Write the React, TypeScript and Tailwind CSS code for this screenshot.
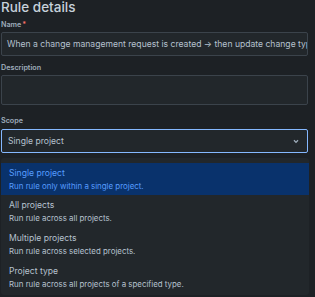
import React from 'react'

type Option = {
  label: string
  description: string
}

const options: Option[] = [
  { label: 'Single project', description: 'Run rule only within a single project.' },
  { label: 'All projects', description: 'Run rule across all projects.' },
  { label: 'Multiple projects', description: 'Run rule across selected projects.' },
  { label: 'Project type', description: 'Run rule across all projects of a specified type.' },
]

const font = { fontFamily: 'Inter, "Liberation Sans", Arial, sans-serif' }

const Label: React.FC<{ children: React.ReactNode; required?: boolean }> = ({ children, required }) => (
  <div className="h-[10px] text-[7.2px] leading-[10px] font-semibold text-[#9fadbc]">
    {children}
    {required && <span className="ml-[1px] text-[#f87168]">*</span>}
  </div>
)

const App: React.FC = () => {
  const selected = 0

  return (
    <div
      className="h-[297px] w-full overflow-hidden bg-[#1d2125] pl-[1px] text-[#b6c2cf]"
      style={font}
    >
      <h1 className="mt-[-1px] h-[16px] text-[13.5px] leading-[16px] font-medium text-[#c7d1db]">
        Rule details
      </h1>

      <div className="mt-[5px]">
        <Label required>Name</Label>
        <div className="mt-[2px] flex h-[24px] w-[307px] items-center overflow-hidden rounded-[2px] border border-[#3b434b] bg-[#22272b] px-[5px]">
          <span className="whitespace-nowrap text-[8.6px] leading-[12px]">
            When a change management request is created → then update change type
          </span>
        </div>
      </div>

      <div className="mt-[7px]">
        <Label>Description</Label>
        <div className="mt-[2px] h-[30px] w-[307px] rounded-[2px] border border-[#3b434b] bg-[#22272b]" />
      </div>

      <div className="mt-[11px]">
        <Label>Scope</Label>
        <div className="mt-[3px] flex h-[24px] w-[307px] items-center justify-between rounded-[2px] border border-[#85b8ff] bg-[#22272b] pl-[6px] pr-[8px]">
          <span className="text-[8.6px] leading-[12px]">Single project</span>
          <svg width="6" height="5" viewBox="0 0 6 5" className="text-[#9fadbc]">
            <path d="M1 1.2 L3 3.4 L5 1.2" fill="none" stroke="currentColor" strokeWidth="1.3" />
          </svg>
        </div>
      </div>

      <div className="mt-[5px] w-[308px] rounded-[3px] bg-[#22272b] pt-[5px] pb-[1px]">
        {options.map((o, i) => (
          <div
            key={o.label}
            className={
              i === selected
                ? 'h-[32px] bg-[#09326c] pl-[8px] pt-[4px] text-[#579dff]'
                : 'h-[33px] pl-[8px] pt-[4px]'
            }
          >
            <div className="text-[8.6px] leading-[12px]">{o.label}</div>
            <div className="mt-[1px] text-[7.9px] leading-[12px]">{o.description}</div>
          </div>
        ))}
      </div>
    </div>
  )
}

export default App
